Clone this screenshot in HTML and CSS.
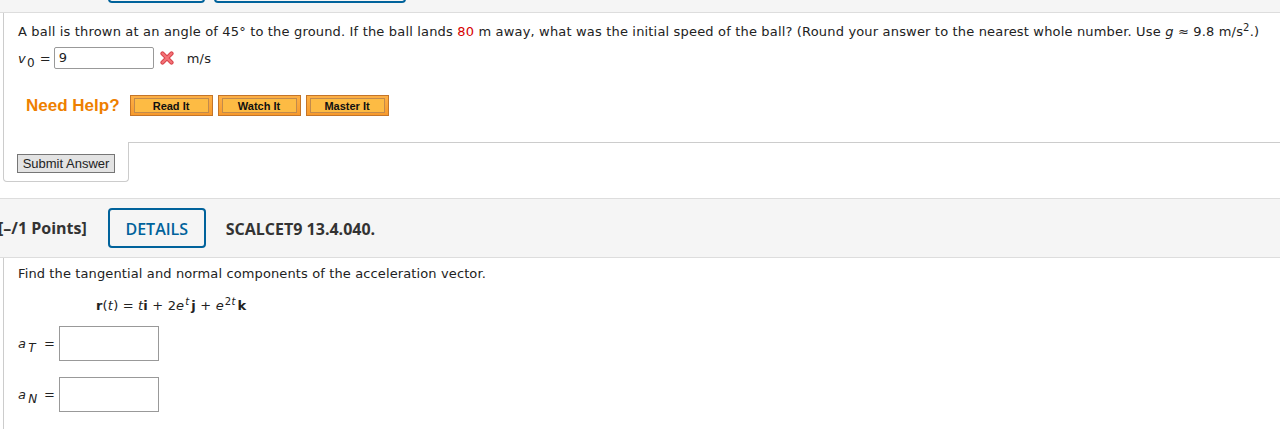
FILE: index.html
```html
<!DOCTYPE html>
<html lang="en">
<head>
<meta charset="utf-8">
<title>Question</title>
<link rel="stylesheet" href="styles.css">
</head>
<body>
<div class="topbar">
  <span class="tb-btn tb-btn1"></span>
  <span class="tb-btn tb-btn2"></span>
</div>

<div class="qbox">
  <p class="qtext">A ball is thrown at an angle of 45° to the ground. If the ball lands <span class="red">80</span> m away, what was the initial speed of the ball? (Round your answer to the nearest whole number. Use <i class="g">g</i> ≈ 9.8 m/s<sup>2</sup>.)</p>
  <div class="ansrow">
    <span class="var"><i>v</i><sub>0</sub></span>
    <span class="eq">=</span>
    <span class="field small">9</span>
    <svg class="xicon" width="14" height="14" viewBox="0 0 14 14">
      <path d="M2.5 2.5 L11.5 11.5 M11.5 2.5 L2.5 11.5" stroke="#d8434a" stroke-width="4.2" stroke-linecap="round"/>
      <path d="M2.5 2.5 L11.5 11.5 M11.5 2.5 L2.5 11.5" stroke="#f47378" stroke-width="2.2" stroke-linecap="round"/>
    </svg>
    <span class="unit">m/s</span>
  </div>
  <div class="help">
    <span class="needhelp">Need Help?</span>
    <span class="hbtn"><span class="hbtn-in">Read It</span></span>
    <span class="hbtn"><span class="hbtn-in">Watch It</span></span>
    <span class="hbtn"><span class="hbtn-in">Master It</span></span>
  </div>
</div>

<div class="submitrow">
  <div class="tab"><button class="submit">Submit Answer</button></div>
  <div class="rest"></div>
</div>

<div class="qheader">
  <span class="points">[–/1 Points]</span>
  <span class="details">DETAILS</span>
  <span class="ref">SCALCET9 13.4.040.</span>
</div>

<div class="qbody">
  <p class="qtext2">Find the tangential and normal components of the acceleration vector.</p>
  <p class="formula"><b>r</b>(<span class="tv">t</span>) = <span class="tv">t</span><b>i</b> + 2<i>e</i><sup class="tv">t</sup><b>j</b> + <i>e</i><sup>2<span class="tv">t</span></sup><b>k</b></p>
  <div class="arow">
    <span class="avar"><i>a</i><sub><i>T</i></sub></span>
    <span class="aeq">=</span>
    <span class="field big"></span>
  </div>
  <div class="arow arow2">
    <span class="avar"><i>a</i><sub><i>N</i></sub></span>
    <span class="aeq">=</span>
    <span class="field big"></span>
  </div>
</div>
</body>
</html>
```

FILE: styles.css
```css
html, body {
  margin: 0;
  padding: 0;
  background: #ffffff;
}
body {
  font-family: "DejaVu Sans", Verdana, sans-serif;
  font-size: 13px;
  letter-spacing: 0.17px;
  color: #222222;
  width: 1280px;
  height: 429px;
  overflow: hidden;
}

/* top strip with cut-off buttons */
.topbar {
  background: #f5f5f5;
  border-bottom: 1px solid #dddddd;
  display: flex;
  align-items: flex-end;
  overflow: hidden;
  padding: 0 0 9px 108px;
  box-sizing: content-box;
  height: 3px;
  gap: 9px;
}
.tb-btn {
  display: block;
  height: 40px;
  flex: none;
  border: 2px solid #00629b;
  border-radius: 4px;
  box-sizing: border-box;
}
.tb-btn1 { width: 97px; }
.tb-btn2 { width: 192px; }

/* question box */
.qbox {
  margin-left: 3px;
  border-left: 1px solid #cccccc;
  padding: 10px 0 26px 14px;
}
.qtext {
  margin: 0;
  line-height: 18px;
  white-space: nowrap;
}
.red { color: #d60000; }
.g { font-style: italic; }
sup {
  font-size: 10px;
  line-height: 0;
  vertical-align: 5px;
}
sub {
  font-size: 12px;
  line-height: 0;
  vertical-align: -4px;
}

.ansrow {
  display: flex;
  align-items: center;
  height: 22px;
  margin-top: 6px;
}
.var i { font-style: italic; }
.var sub { margin-left: 1px; }
.eq { margin-left: 5px; }
.field {
  display: block;
  box-sizing: border-box;
  background: #ffffff;
  border: 1px solid #999999;
  flex: none;
}
.field.small {
  width: 100px;
  height: 22px;
  margin-left: 3px;
  border-radius: 2px;
  padding: 1px 0 0 4px;
  line-height: 18px;
  font-size: 13px;
}
.xicon {
  display: block;
  margin-left: 6px;
  flex: none;
}
.unit { margin-left: 13px; }

/* need help */
.help {
  display: flex;
  align-items: center;
  margin-top: 26px;
  height: 21px;
  letter-spacing: 0;
}
.needhelp {
  font-family: "Liberation Sans", Arial, sans-serif;
  font-weight: bold;
  font-size: 17px;
  color: #ee7f00;
  margin-left: 8px;
  margin-right: 10px;
}
.hbtn {
  display: block;
  box-sizing: border-box;
  width: 83px;
  height: 21px;
  margin-right: 5px;
  border: 1px solid #c47529;
  background: linear-gradient(#fdb046, #f79a2c);
  padding: 2px 3px;
}
.hbtn-in {
  display: block;
  height: 15px;
  box-sizing: border-box;
  border: 1px solid #c28a4c;
  background: #fdbb44;
  text-align: center;
  font-family: "Liberation Sans", Arial, sans-serif;
  font-weight: bold;
  font-size: 11px;
  line-height: 14px;
  color: #111111;
}

/* submit tab */
.submitrow {
  display: flex;
}
.tab {
  margin-left: 3px;
  flex: none;
  border-left: 1px solid #cccccc;
  border-right: 1px solid #cccccc;
  border-bottom: 1px solid #cccccc;
  border-radius: 0 0 4px 4px;
  padding: 12px 0 8px 13px;
  box-sizing: content-box;
  width: 111px;
}
.submit {
  display: block;
  margin: 0;
  width: 98px;
  height: 19px;
  padding: 0;
  font-family: "Liberation Sans", Arial, sans-serif;
  font-size: 13px;
  line-height: 17px;
  color: #222222;
  background: #e3e3e3;
  border: 1px solid #767676;
  border-radius: 0;
}
.rest {
  flex: 1;
  border-top: 1px solid #cccccc;
}

/* question header */
.qheader {
  margin-top: 16px;
  background: #f5f5f5;
  border-top: 1px solid #dddddd;
  border-bottom: 1px solid #dddddd;
  height: 58px;
  display: flex;
  align-items: center;
  font-family: "Open Sans", sans-serif;
  font-size: 16px;
  letter-spacing: 0;
  color: #333333;
}
.points {
  font-weight: 700;
  margin-left: -2px;
  white-space: nowrap;
}
.details {
  box-sizing: border-box;
  width: 98px;
  height: 40px;
  margin-left: 21px;
  border: 2px solid #00629b;
  border-radius: 4px;
  color: #00629b;
  font-weight: 600;
  display: flex;
  align-items: center;
  justify-content: center;
  padding-top: 1px;
}
.ref {
  font-weight: 700;
  margin-left: 20px;
  padding-top: 1px;
}

/* question body */
.qbody {
  margin-left: 3px;
  border-left: 1px solid #cccccc;
  padding: 7px 0 20px 14px;
}
.qtext2 {
  margin: 0;
  line-height: 18px;
  letter-spacing: 0.12px;
}
.formula {
  margin: 14px 0 0 78px;
  line-height: 18px;
}
.formula b { font-weight: bold; }
.formula i { font-style: italic; }
.formula sup { margin-left: 1px; margin-right: 2px; }
.tv { font-style: italic; }
.arow {
  display: flex;
  align-items: center;
  margin-top: 11px;
  height: 34px;
}
.arow2 { margin-top: 17px; }
.avar {
  width: 26px;
  flex: none;
}
.avar i { font-style: italic; }
.avar sub { font-size: 12px; margin-left: 2px; }
.aeq { width: 15px; flex: none; }
.field.big {
  width: 100px;
  height: 35px;
}
```
